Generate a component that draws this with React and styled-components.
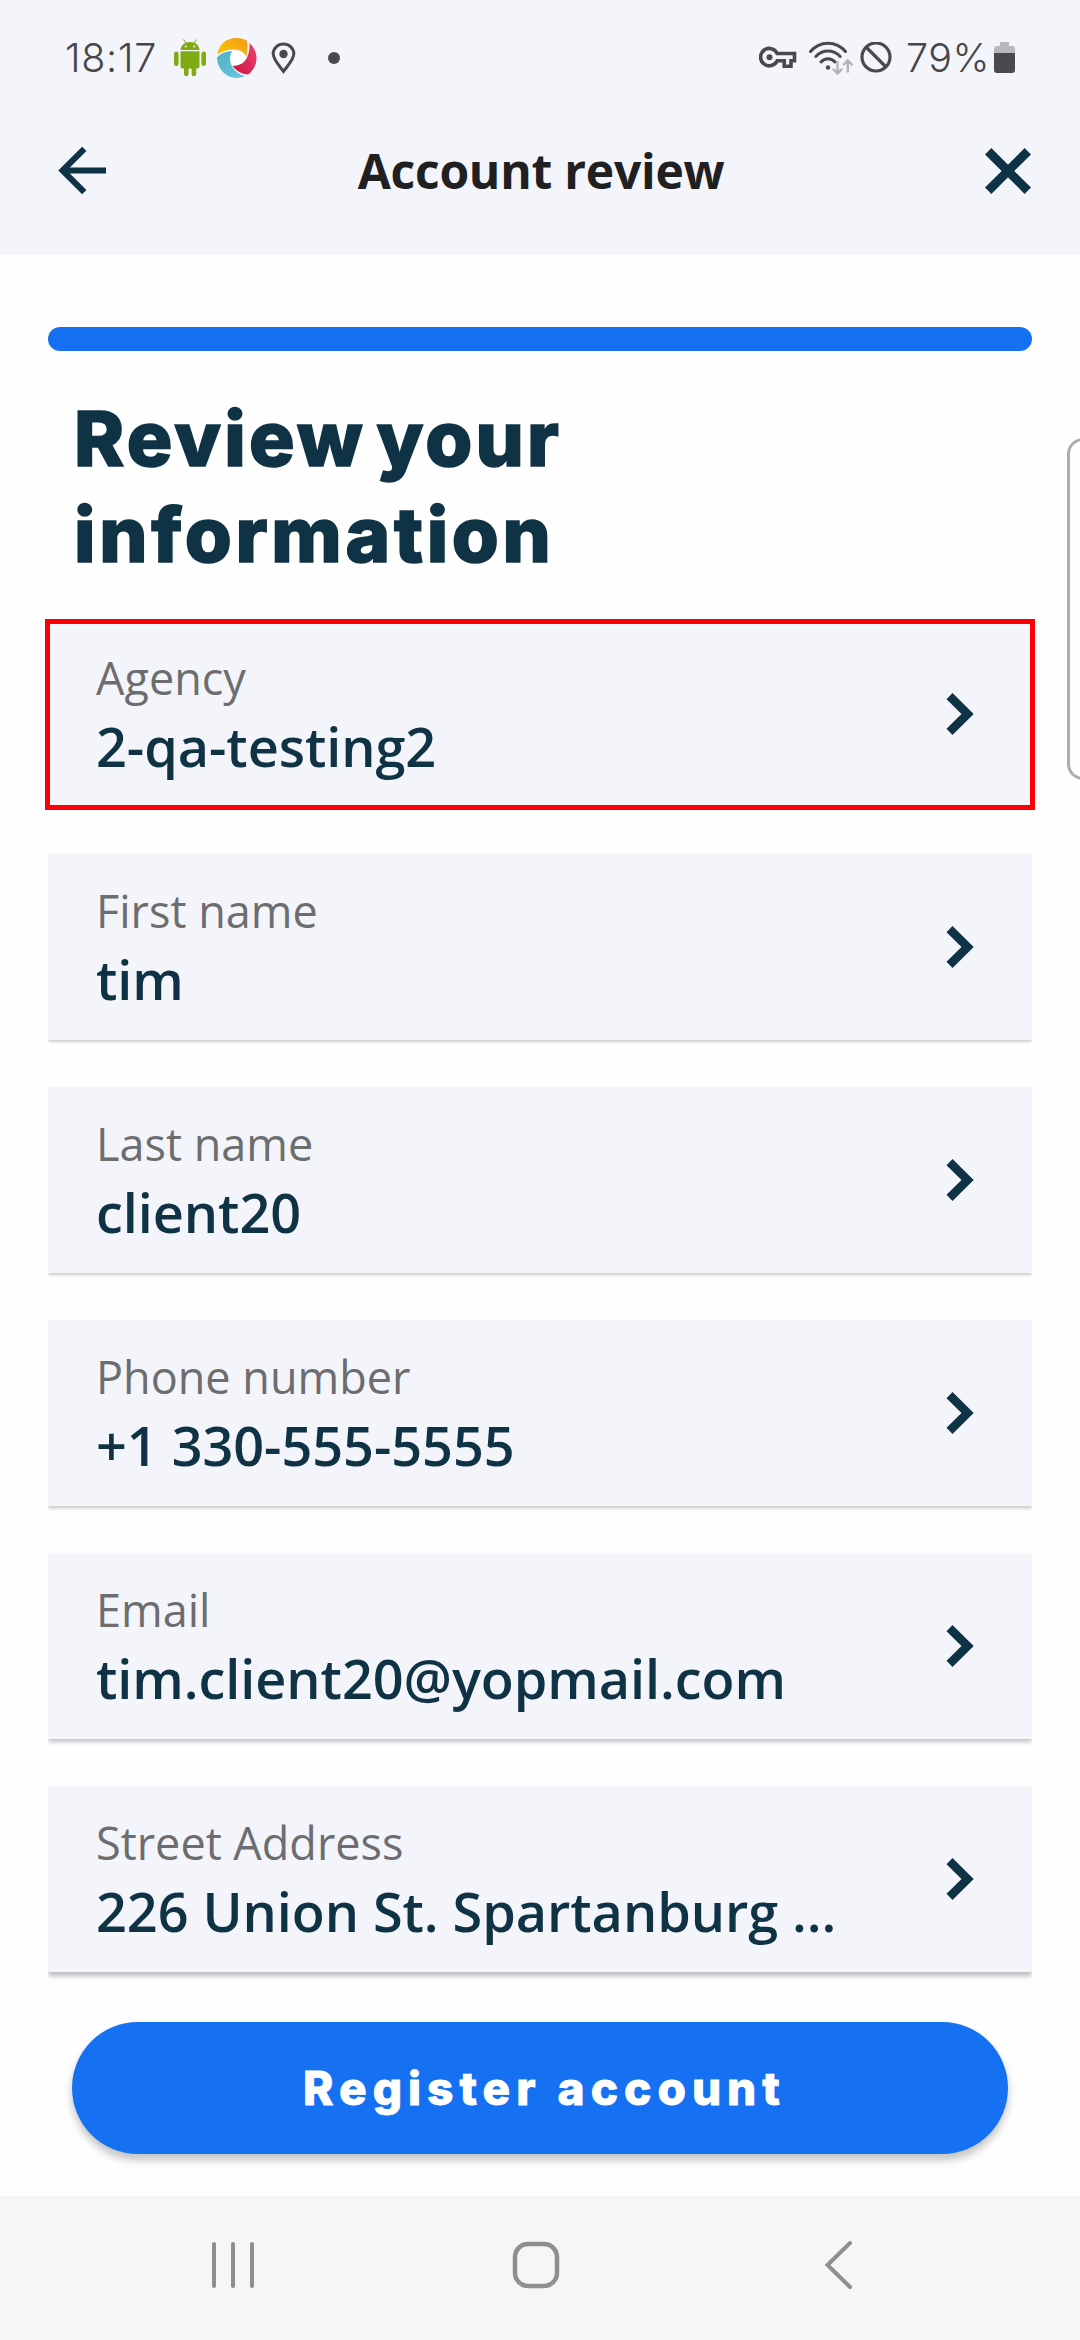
import React from "react";
import styled, { createGlobalStyle } from "styled-components";

const GlobalStyle = createGlobalStyle`
  * { box-sizing: border-box; }
  html, body { margin: 0; padding: 0; background: #fefefe; }
  button { font: inherit; border: 0; padding: 0; background: none; }
  svg { display: block; flex: none; }
`;

const navy = "#0f3345";
const blue = "#1570f2";
const surface = "#f4f5fb";
const ink = "#4a4a4d";

const Screen = styled.div`
  position: relative;
  width: 1080px;
  height: 2340px;
  overflow: hidden;
  display: flex;
  flex-direction: column;
  background: #fefefe;
  font-family: "Open Sans", "Noto Sans", sans-serif;
`;

const Top = styled.header`
  height: 255px;
  background: ${surface};
`;

const StatusBar = styled.div`
  height: 116px;
  padding: 0 65px 0 65px;
  display: flex;
  justify-content: space-between;
  align-items: center;
`;

const StatusGroup = styled.div`
  display: flex;
  align-items: center;
`;

const StatusText = styled.span`
  width: ${(p) => p.$width}px;
  margin-right: ${(p) => p.$after}px;
  white-space: nowrap;
  font-family: Inter, Roboto, sans-serif;
  font-weight: 300;
  font-size: 39.5px;
  line-height: 48px;
  letter-spacing: ${(p) => p.$spacing}px;
  color: #46464a;
`;

const AppBar = styled.div`
  height: 110px;
  padding: 0 48px 0 58px;
  display: grid;
  grid-template-columns: 48px 1fr 48px;
  align-items: center;
`;

const AppTitle = styled.h1`
  margin: 0 8px 0 0;
  text-align: center;
  font-size: 48px;
  line-height: 66px;
  font-weight: 700;
  letter-spacing: -0.25px;
  color: #202022;
`;

const Main = styled.main`
  flex: 1;
  display: flex;
  flex-direction: column;
  padding: 72px 48px 0;
`;

const Progress = styled.div`
  height: 24px;
  border-radius: 12px;
  background: ${blue};
`;

const Heading = styled.h2`
  margin: 39px 24px 39px 26px;
  width: 600px;
  font-family: Inter, sans-serif;
  font-weight: 800;
  font-size: 76px;
  line-height: 96px;
  -webkit-text-stroke: 1.6px ${navy};
  color: ${navy};
`;

const Line = styled.span`
  display: block;
  letter-spacing: ${(p) => p.$spacing}px;
  word-spacing: -9px;
`;

const List = styled.div`
  display: flex;
  flex-direction: column;
  gap: 47px;
`;

const Row = styled.button`
  position: relative;
  height: 186px;
  padding: 27px 58px 0 48px;
  display: flex;
  justify-content: space-between;
  align-items: flex-start;
  text-align: left;
  background: ${surface};
  box-shadow: 0 ${(p) => p.$depth}px ${(p) => p.$depth + 1}px
    rgba(0, 0, 0, ${(p) => 0.13 + p.$depth * 0.035});
  clip-path: inset(-6px ${(p) => (p.$marked ? -6 : 0)}px -14px);
`;

const Marker = styled.span`
  position: absolute;
  inset: -2px -3px -3px;
  border: 5px solid #fb0007;
`;

const Label = styled.div`
  font-size: 45px;
  line-height: 60px;
  color: #6d6d6f;
`;

const Value = styled.div`
  font-size: 54px;
  line-height: 76px;
  font-weight: 600;
  white-space: nowrap;
  letter-spacing: -0.05px;
  color: ${navy};
`;

const RowChevron = styled.svg`
  margin-top: 45px;
`;

const Register = styled.button`
  height: 132px;
  margin: 50px 24px 0;
  border-radius: 66px;
  background: ${blue};
  box-shadow: 0 6px 9px rgba(0, 0, 0, 0.24);
  text-align: center;

  && {
    padding-left: 9px;
    font-family: Inter, sans-serif;
    font-weight: 800;
    font-size: 46px;
    line-height: 132px;
    letter-spacing: 6px;
    -webkit-text-stroke: 0.8px #fff;
    color: #fff;
  }
`;

const NavBar = styled.nav`
  height: 144px;
  padding: 0 226px 6px 210px;
  display: flex;
  justify-content: space-between;
  align-items: center;
  background: #f6f6f8;
`;

const HomeIcon = styled.svg`
  margin-right: 8px;
`;

const EdgePanel = styled.aside`
  position: absolute;
  top: 438px;
  left: 1067px;
  width: 40px;
  height: 342px;
  border: 3px solid #adadad;
  border-radius: 16px;
  background: #fefefe;
`;

const AndroidIcon = styled.svg`
  margin-right: 11px;
`;
const SwirlIcon = styled.svg`
  margin-right: 14px;
`;
const PinIcon = styled.svg`
  margin-right: 32px;
`;
const KeyIcon = styled.svg`
  margin-right: 12px;
`;
const WifiIcon = styled.svg`
  margin-right: 7px;
`;
const BlockIcon = styled.svg`
  margin-right: 14px;
`;

const rows = [
  { label: "Agency", value: "2-qa-testing2", depth: 1, marked: true },
  { label: "First name", value: "tim", depth: 1.5 },
  { label: "Last name", value: "client20", depth: 2 },
  { label: "Phone number", value: "+1 330-555-5555", depth: 2.5 },
  { label: "Email", value: "tim.client20@yopmail.com", depth: 3 },
  { label: "Street Address", value: "226 Union St. Spartanburg ...", depth: 3.5 },
];

export default function App() {
  return (
    <Screen>
      <GlobalStyle />
      <Top>
        <StatusBar>
          <StatusGroup>
            <StatusText $width={94} $after={15} $spacing={0.7}>18:17</StatusText>
            <AndroidIcon width="32" height="38" viewBox="0 0 32 38" fill="#7faa12">
              <path d="M6.5 11C7 6 10.500 3 16 3s9 3 9.500 8z" />
              <path d="M9.500 .5l2.500 4M22.500 .5l-2.500 4" stroke="#7faa12" strokeWidth="1" />
              <rect x="0" y="12.500" width="4.600" height="14.500" rx="2.300" />
              <rect x="27.400" y="12.500" width="4.600" height="14.500" rx="2.300" />
              <path d="M6.500 12.300h19v15.200a2 2 0 0 1-2 2h-1.300v5.400a2.200 2.200 0 0 1-4.600 0v-5.400h-3v5.400a2.200 2.200 0 0 1-4.600 0v-5.400H8.500a2 2 0 0 1-2-2z" />
              <circle cx="11.800" cy="7.600" r="1" fill="#fff" />
              <circle cx="20.200" cy="7.600" r="1" fill="#fff" />
            </AndroidIcon>
            <SwirlIcon width="40" height="40" viewBox="0 0 40 40">
              <defs>
                <linearGradient id="gold" x1="0" y1="1" x2="1" y2="0">
                  <stop offset="0" stopColor="#fdc90c" />
                  <stop offset="1" stopColor="#f29a14" />
                </linearGradient>
                <linearGradient id="rose" x1="0" y1="1" x2="1" y2="0">
                  <stop offset="0" stopColor="#c8103f" />
                  <stop offset="1" stopColor="#ee4770" />
                </linearGradient>
                <linearGradient id="aqua" x1="0" y1="0" x2="1" y2="1">
                  <stop offset="0" stopColor="#4fb0c4" />
                  <stop offset="1" stopColor="#6cc9df" />
                </linearGradient>
              </defs>
              <circle cx="20" cy="20" r="14" fill="#fff" />
              <path d="M.3 16.500C1.500 6.500 9.500 0 19 0c4 0 7.500 .8 10.800 2.500C31 8 31 13.500 29.300 18.500 27 14 22 11.500 16 11.600 10 11.800 5 13.500 .3 16.500z" fill="url(#gold)" />
              <path d="M32.300 5C37 9 39.500 14.500 39.500 20c0 6.500-3 12.500-8.200 16.500-6.300-.3-12.300-3.500-15.800-9C22 28.500 27.500 25 30 19.500c2-4.500 3-9.500 2.300-14.500z" fill="url(#rose)" />
              <path d="M0 19.500C3.500 15.500 8.500 13.200 15 13.200c-2.700 4.500-2.500 10.300 0 14.800 2.700 5 7.500 8.800 13.500 10C25.500 39.300 22.500 40 20 40 9 40 .3 31 0 19.500z" fill="url(#aqua)" />
            </SwirlIcon>
            <PinIcon width="25" height="33" viewBox="0 0 25 33">
              <path d="M12.500 29.500C7.500 22.500 2.200 17.500 2.200 11.800a10.300 9.800 0 0 1 20.600 0c0 5.700-5.300 10.700-10.300 17.700z" fill="none" stroke={ink} strokeWidth="3" />
              <circle cx="12.500" cy="12" r="4.200" fill={ink} />
            </PinIcon>
            <svg width="12" height="12" viewBox="0 0 12 12">
              <circle cx="6" cy="6" r="6" fill={ink} />
            </svg>
          </StatusGroup>
          <StatusGroup>
            <KeyIcon width="38" height="24" viewBox="0 0 38 24">
              <path d="M18.200 7.500H35.500v7.200H32v5.500h-6.800v-5.500h-7A8.700 8.700 0 1 1 18.200 7.500z" fill="none" stroke={ink} strokeWidth="3.600" />
              <circle cx="10.500" cy="11.300" r="3" fill={ink} />
            </KeyIcon>
            <WifiIcon width="44" height="36" viewBox="0 0 44 36" fill="none" strokeLinecap="round">
              <path d="M1.500 11.500C11 .5 27 .5 36.500 11.500" stroke={ink} strokeWidth="3" />
              <path d="M6.800 16.500c7-7.200 17.400-7.200 24.400 0" stroke={ink} strokeWidth="3" />
              <path d="M12 22c4-4.300 10-4.300 14 0" stroke={ink} strokeWidth="3" />
              <circle cx="19" cy="27.500" r="2.200" fill={ink} />
              <path d="M28.500 22v11M24.500 29.500l4 4 4-4M38.800 31.500v-11M34.800 24.500l4-4 4 4" stroke="#b3b3b7" strokeWidth="2.400" />
            </WifiIcon>
            <BlockIcon width="32" height="32" viewBox="0 0 32 32" fill="none" stroke={ink} strokeWidth="3.200">
              <circle cx="16" cy="15" r="14" />
              <path d="M6 5l20 20" />
            </BlockIcon>
            <StatusText $width={81} $after={7} $spacing={0.5}>79%</StatusText>
            <svg width="21" height="32" viewBox="0 0 21 32">
              <path d="M6 0h9v4h3a3 3 0 0 1 3 3v4H0V7a3 3 0 0 1 3-3h3z" fill="#b9b9bd" />
              <path d="M0 11h21v17a3 3 0 0 1-3 3H3a3 3 0 0 1-3-3z" fill={ink} />
            </svg>
          </StatusGroup>
        </StatusBar>
        <AppBar>
          <svg width="48" height="48" viewBox="0 0 48 48" fill="none" stroke={navy} strokeWidth="6">
            <path d="M48 23.500H5M26.300 1.800L4.500 23.500l21.800 21.700" />
          </svg>
          <AppTitle>Account review</AppTitle>
          <svg width="48" height="48" viewBox="0 0 48 48" fill="none" stroke={navy} strokeWidth="9">
            <path d="M4.200 4.200l39.600 39.600M43.800 4.200L4.200 43.800" />
          </svg>
        </AppBar>
      </Top>
      <Main>
        <Progress />
        <Heading>
          <Line $spacing={3.2}>Review your</Line>
          <Line $spacing={3.7}>information</Line>
        </Heading>
        <List>
          {rows.map((r) => (
            <Row key={r.label} $depth={r.depth} $marked={r.marked}>
              <div>
                <Label>{r.label}</Label>
                <Value>{r.value}</Value>
              </div>
              <RowChevron width="28" height="42" viewBox="0 0 28 42">
                <path d="M.5 6.200L6.500 0l21.200 21L6.500 42 .5 35.800 15.500 21z" fill={navy} />
              </RowChevron>
              {r.marked && <Marker />}
            </Row>
          ))}
        </List>
        <Register>Register account</Register>
      </Main>
      <NavBar>
        <svg width="46" height="50" viewBox="0 0 46 50" stroke="#8f8f92" strokeWidth="4" strokeLinecap="round">
          <path d="M4 4v42M23 4v42M42 4v42" />
        </svg>
        <HomeIcon width="48" height="48" viewBox="0 0 48 48" fill="none" stroke="#8f8f92" strokeWidth="4.500">
          <rect x="3" y="3" width="42" height="42" rx="13" />
        </HomeIcon>
        <svg width="30" height="50" viewBox="0 0 30 50" fill="none" stroke="#8f8f92" strokeWidth="4" strokeLinecap="round">
          <path d="M26 3L3.500 25 26 47" />
        </svg>
      </NavBar>
      <EdgePanel />
    </Screen>
  );
}
